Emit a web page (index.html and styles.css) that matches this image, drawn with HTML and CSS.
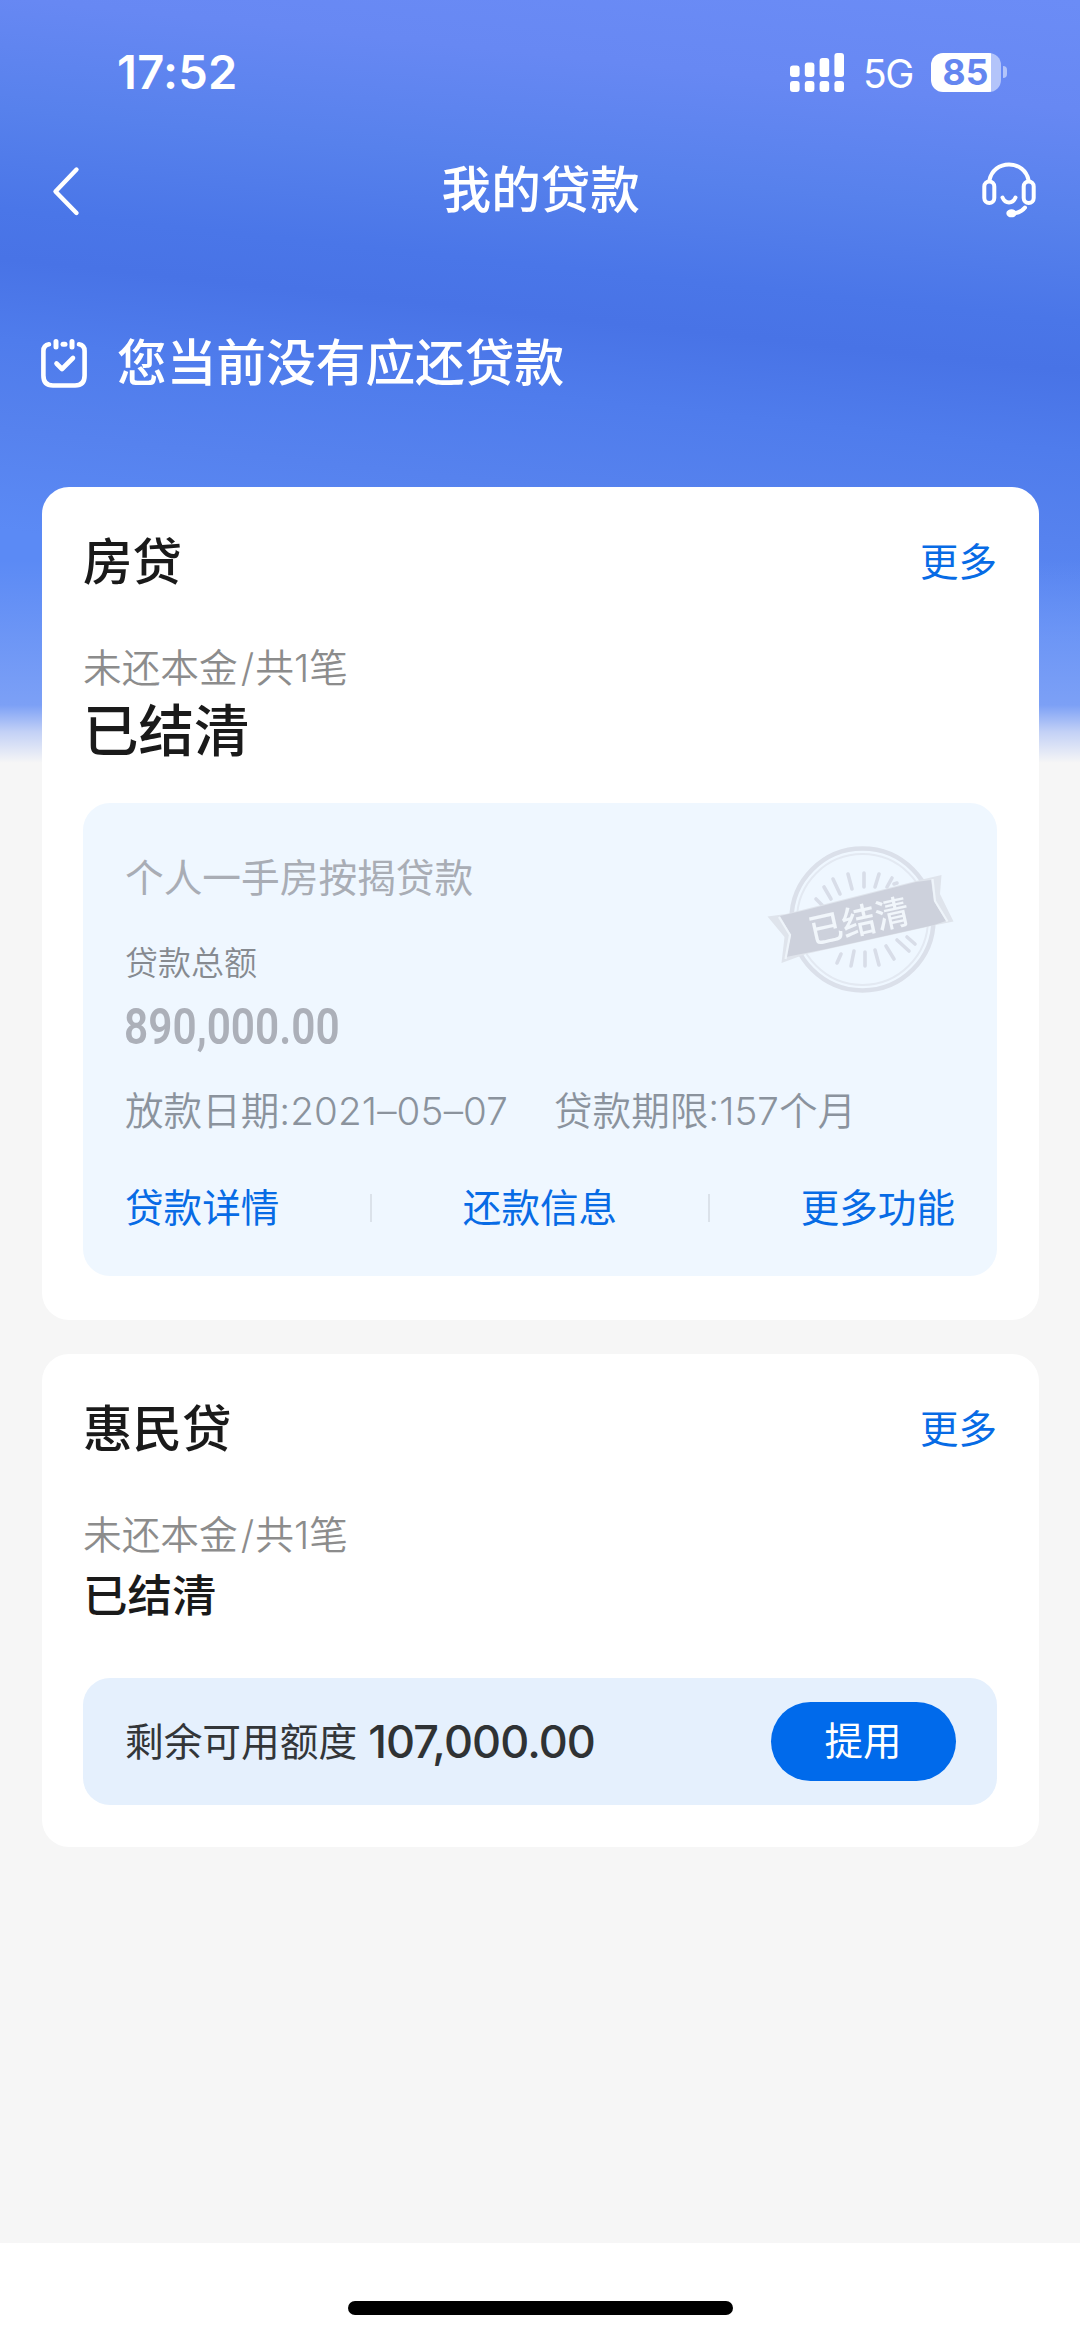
FILE: index.html
```html
<!DOCTYPE html>
<html lang="zh-CN">
<head>
<meta charset="utf-8">
<title>我的贷款</title>
<link rel="stylesheet" href="styles.css">
</head>
<body>
<div class="screen">
  <header class="status-bar">
    <span class="time">17:52</span>
    <div class="status-icons">
      <svg class="signal" width="54" height="39" viewBox="0 0 54 39" fill="#fff">
        <rect x="0" y="12.5" width="9.6" height="11.5" rx="3"/>
        <rect x="14.8" y="9.5" width="9.6" height="14.5" rx="3"/>
        <rect x="29.6" y="5" width="9.6" height="19" rx="3"/>
        <rect x="44.4" y="0" width="9.6" height="24" rx="3"/>
        <rect x="0" y="28" width="9.6" height="11" rx="3"/>
        <rect x="14.8" y="28" width="9.6" height="11" rx="3"/>
        <rect x="29.6" y="28" width="9.6" height="11" rx="3"/>
        <rect x="44.4" y="28" width="9.6" height="11" rx="3"/>
      </svg>
      <span class="network">5G</span>
      <div class="battery"><span class="level">85</span></div>
      <span class="battery-tip"></span>
    </div>
  </header>

  <nav class="nav-bar">
    <svg class="back" width="30" height="52" viewBox="0 0 30 52" fill="none" stroke="#fff" stroke-width="4.4" stroke-linecap="round" stroke-linejoin="round">
      <path d="M25.500 4.500L4.500 26.500L25.500 48"/>
    </svg>
    <h1 class="page-title">我的贷款</h1>
    <svg class="service" width="54" height="56" viewBox="0 0 54 56" fill="none" stroke="#fff" stroke-width="4" stroke-linecap="round" stroke-linejoin="round">
      <path d="M7.500 18C9.500 8.500 17.500 2.500 27 2.500S44.500 8.500 46.500 18"/>
      <rect x="2.300" y="19.500" width="10" height="21.500" rx="5"/>
      <rect x="41.700" y="19.500" width="10" height="21.500" rx="5"/>
      <path d="M20.500 35.500C22 39 24.300 40.500 27 40.500S32 39 33.500 35.500"/>
      <path d="M43 45.500C40 49.500 36.500 51 31 51.500"/>
      <ellipse cx="29.500" cy="51.300" rx="3.200" ry="2" fill="#fff"/>
    </svg>
  </nav>

  <section class="notice">
    <svg width="46" height="49" viewBox="0 0 46 49" fill="none" stroke="#fff" stroke-width="4.600" stroke-linecap="round" stroke-linejoin="round">
      <path d="M8 5.300C4 6 2.400 8.500 2.400 12V36.500C2.400 43 5.500 46.500 12 46.500H34C40.500 46.500 43.600 43 43.600 36.500V12C43.600 8.500 42 6 38 5.300"/>
      <path d="M22 5.300H24" stroke-width="5"/>
      <path d="M15 2.500V8M31 2.500V8" stroke-width="5"/>
      <path d="M15.500 24.500L21 30L32 19"/>
    </svg>
    <p class="notice-text">您当前没有应还贷款</p>
  </section>

  <main class="cards">
    <section class="card card-house">
      <div class="card-head">
        <h2 class="card-title">房贷</h2>
        <a class="more">更多</a>
      </div>
      <p class="caption">未还本金<span class="slash">/</span>共1笔</p>
      <p class="settled settled-large">已结清</p>
      <div class="loan">
        <p class="loan-name">个人一手房按揭贷款</p>
        <p class="loan-label">贷款总额</p>
        <p class="loan-amount">890,000.00</p>
        <p class="loan-meta"><span>放款日期:<span class="digits">2021–05–07</span></span><span>贷款期限:157个月</span></p>
        <div class="actions">
          <a>贷款详情</a><i class="divider"></i><a>还款信息</a><i class="divider"></i><a>更多功能</a>
        </div>
        <svg class="stamp" width="192" height="154" viewBox="0 0 192 154">
          <g fill="none">
            <circle cx="96.500" cy="78.500" r="71" stroke-width="4.500" stroke="#dbe0ea"/>
            <circle cx="96.500" cy="78.500" r="65.500" stroke-width="2" stroke="#e3e9f2"/>
          </g>
          <g stroke="#d8dde8" stroke-width="3.600" stroke-linecap="round">
            <path d="M98 46V32M86 48L82 33M109 46L113 33M74 53L67 38M121 46L126 37M65 58L58 46M56 64L50 58M99 111V125M88 110L85 125M109 109L113 124M120 105L128 118M131 99L143 110M75 113L71 122M141 96L149 103M128 43L131 42"/>
          </g>
          <path d="M1.500 75.500L20 73L154 39L175.500 34L174 53L187.500 80.500L170 84L40 113L15.500 122L18.500 96Z" fill="#dfe4ec"/>
          <path d="M14 75L40 69L150 41L165 39L168 60L180 80L168 84L60 108L20 116L25 94Z" fill="#cdd1dc"/>
          <path d="M13 76L24 94L19.500 118M166.500 38L169 60L181.500 80.500" fill="none" stroke="#eef4fa" stroke-width="2.200"/>
          <text class="stamp-text" x="93" y="92.500" text-anchor="middle" transform="rotate(-12.500 93 80.500)">已结清</text>
        </svg>
      </div>
    </section>

    <section class="card card-credit">
      <div class="card-head">
        <h2 class="card-title">惠民贷</h2>
        <a class="more">更多</a>
      </div>
      <p class="caption">未还本金<span class="slash">/</span>共1笔</p>
      <p class="settled settled-small">已结清</p>
      <div class="limit">
        <span class="limit-label">剩余可用额度</span>
        <span class="limit-value">107,000.00</span>
        <button class="withdraw">提用</button>
      </div>
    </section>
  </main>

  <footer class="home-area"><span class="home-indicator"></span></footer>
</div>
</body>
</html>
```

FILE: styles.css
```css
* { box-sizing: border-box; margin: 0; padding: 0; }

body {
  font-family: Inter, "Noto Sans CJK SC", sans-serif;
  color: #1a1a1a;
  background: #f6f6f6;
}

.screen {
  display: flex;
  flex-direction: column;
  width: 1080px;
  height: 2337px;
  overflow: hidden;
  background:
    linear-gradient(180deg, rgba(124,160,246,0) 560px, #7ca0f6 705px, #c3d1f6 732px, #f6f6f6 763px),
    linear-gradient(186deg, #6b8cf6 0, #6788f3 110px, #5781ec 220px, #4a76e8 320px, #4873e6 370px, #4f7cec 450px, #5682ee 540px, #5b8af5 640px);
}

.status-bar {
  display: flex;
  justify-content: space-between;
  align-items: center;
  height: 143px;
  padding: 1px 73px 0 117px;
  color: #fff;
}
.time { font-size: 47px; font-weight: 600; letter-spacing: .3px; line-height: 60px; }
.status-icons { display: flex; align-items: center; }
.network { margin: 3px 0 0 19px; font-size: 39px; line-height: 40px; letter-spacing: -1.500px; width: 49px; }
.battery {
  display: flex;
  align-items: center;
  justify-content: center;
  width: 70px;
  height: 39px;
  margin-left: 19px;
  border-radius: 12px;
  background: linear-gradient(90deg, #fff 60px, #b3c4fa 60px);
}
.level { margin-right: 1px; color: #6486f0; font-size: 35.500px; font-weight: 700; line-height: 39px; }
.battery-tip { width: 4px; height: 12px; margin-left: 2px; border-radius: 0 6px 6px 0; background: #b3c4fa; }

.nav-bar {
  display: flex;
  justify-content: space-between;
  align-items: center;
  height: 94px;
  padding: 0 44.500px 0 51px;
}
.back { margin-top: 2px; }
.page-title { margin-left: 19px; color: #fff; font-size: 49.600px; font-weight: 500; line-height: 70px; }

.notice {
  display: flex;
  align-items: center;
  gap: 30px;
  height: 250px;
  padding: 2px 0 0 41px;
  color: #fff;
}
.notice-text { font-size: 49.700px; font-weight: 500; line-height: 70px; }

.cards {
  display: flex;
  flex-direction: column;
  gap: 34px;
  padding: 0 41.500px;
}
.card { padding: 37px 41.500px 0; border-radius: 27px; background: #fff; }
.card-house { height: 833px; }
.card-credit { height: 493px; }
.card-head { display: flex; justify-content: space-between; align-items: center; height: 76px; }
.card-title { font-size: 49.500px; font-weight: 500; line-height: 76px; }
.more { color: #076be5; font-size: 38.500px; line-height: 50px; }
.caption { margin-top: 43px; color: #8c8c8c; font-size: 38.700px; font-weight: 350; line-height: 50px; }
.slash { margin: 0 1px 0 3px; }
.settled { font-weight: 500; }
.settled-large { margin-top: 8px; font-size: 55.500px; line-height: 60px; }
.settled-small { margin-top: 11px; font-size: 44.500px; line-height: 50px; }

.loan {
  position: relative;
  height: 473px;
  margin-top: 42px;
  padding: 50px 42px 0;
  border-radius: 27px;
  background: #eff7ff;
}
.loan-name { color: #a9adb5; font-size: 38.700px; font-weight: 400; line-height: 50px; }
.loan-label { margin-top: 38px; color: #868a90; font-size: 33px; font-weight: 350; line-height: 44px; }
.loan-amount {
  margin: 17px 0 0 -1px;
  color: #acb0b9;
  font-family: Roboto, sans-serif;
  font-size: 50px;
  font-weight: 600;
  line-height: 50px;
  transform: scaleX(.848);
  transform-origin: left;
}
.loan-meta {
  display: flex;
  gap: 46px;
  margin-top: 34px;
  color: #8b939d;
  font-size: 38.600px;
  font-weight: 350;
  line-height: 50px;
  white-space: nowrap;
}
.digits { letter-spacing: .15px; }
.actions {
  display: flex;
  justify-content: space-between;
  align-items: center;
  margin-top: 47px;
  color: #076be5;
  font-size: 38.600px;
  line-height: 50px;
}
.divider { width: 1.500px; height: 28px; background: #dbe2ea; }
.stamp { position: absolute; top: 38px; right: 39px; filter: blur(.7px); }
.stamp-text { fill: #f1f6fb; font-size: 34px; font-weight: 500; }

.limit {
  display: flex;
  align-items: center;
  height: 127px;
  margin-top: 57px;
  padding: 0 41.500px 0 42px;
  border-radius: 27px;
  background: #e5f0fd;
}
.limit-label { color: #333639; font-size: 38.700px; line-height: 50px; }
.limit-value { margin-left: 11px; color: #2f3234; font-size: 45px; font-weight: 500; line-height: 50px; letter-spacing: -.9px; }
.withdraw {
  width: 185px;
  height: 79px;
  margin-left: auto;
  border: 0;
  border-radius: 40px;
  background: #006aeb;
  color: #fff;
  font: 400 38.500px/79px Inter, "Noto Sans CJK SC", sans-serif;
}

.home-area {
  display: flex;
  justify-content: center;
  height: 94px;
  margin-top: auto;
  padding-top: 58px;
  background: #fff;
}
.home-indicator { width: 385px; height: 14px; border-radius: 7px; background: #000; }
```
